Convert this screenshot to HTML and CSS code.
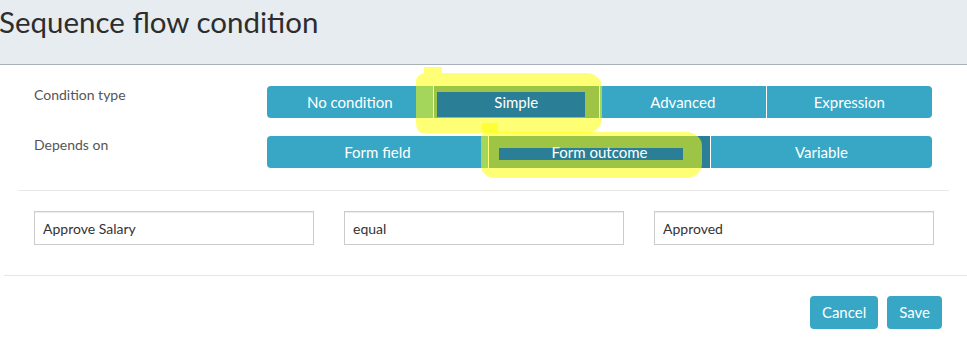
FILE: index.html
```html
<!DOCTYPE html>
<html lang="en">
<head>
  <meta charset="UTF-8">
  <title>Sequence flow condition</title>
  <link rel="stylesheet" href="styles.css">
</head>
<body>
  <div class="modal-header">
    <h2 class="modal-title">Sequence flow condition</h2>
  </div>

  <div class="modal-body">
    <div class="form-row">
      <label class="form-label">Condition type</label>
      <div class="btn-group">
        <button class="btn">No condition</button>
        <button class="btn active">Simple</button>
        <button class="btn">Advanced</button>
        <button class="btn">Expression</button>
      </div>
    </div>
    <div class="form-row">
      <label class="form-label">Depends on</label>
      <div class="btn-group">
        <button class="btn">Form field</button>
        <button class="btn active">Form outcome</button>
        <button class="btn">Variable</button>
      </div>
    </div>

    <hr class="divider">

    <div class="input-row">
      <input class="form-control" type="text" value="Approve Salary">
      <input class="form-control" type="text" value="equal">
      <input class="form-control" type="text" value="Approved">
    </div>
  </div>

  <div class="modal-footer">
    <button class="btn">Cancel</button>
    <button class="btn">Save</button>
  </div>

  <!-- highlighter marks drawn over the screenshot -->
  <div class="marker marker-simple"></div>
  <div class="marker marker-simple-tick"></div>
  <div class="marker marker-outcome"></div>
  <div class="marker marker-outcome-tick"></div>
</body>
</html>
```

FILE: styles.css
```css
* {
  box-sizing: border-box;
}

body {
  position: relative;
  margin: 0;
  width: 967px;
  height: 344px;
  overflow: hidden;
  background: #fff;
  font-family: Lato, "Open Sans", sans-serif;
  color: #333;
}

/* 标题栏 */
.modal-header {
  height: 65px;
  background: #e7ecf0;
  border-bottom: 1px solid #a8b0bc;
  padding-top: 2px;
}

.modal-title {
  margin: 0 0 0 -1px;
  font-size: 29.5px;
  line-height: 40px;
  font-weight: 400;
  color: #2d2d2d;
}

.modal-body {
  padding: 21px 0 0;
}

.form-row {
  display: grid;
  grid-template-columns: 233px 665px;
  align-items: start;
  padding-left: 34px;
  margin-bottom: 18px;
}

.form-label {
  margin-top: -1px;
  font-size: 14px;
  line-height: 20px;
  color: #555;
}

/* 按钮 */
.btn {
  border: 0;
  border-radius: 4px;
  background: #37a7c5;
  color: #fff;
  font-family: inherit;
  font-size: 15px;
  line-height: 33px;
  height: 33px;
  padding: 0 12px;
}

.btn-group {
  display: flex;
  gap: 1px;
}

.btn-group .btn {
  flex: 1;
  height: 32px;
  line-height: 32px;
  border-radius: 0;
  padding: 0;
}
.btn-group .btn:first-child {border-radius: 4px 0 0 4px;}
.btn-group .btn:last-child {border-radius: 0 4px 4px 0;}
.btn-group .btn.active {background: #2a7f96;}

.divider {
  margin: 22px 18px 20px;
  border: 0;
  border-top: 1px solid #e8e8e8;
}

.input-row {
  display: grid;
  grid-template-columns: repeat(3, 280px);
  gap: 30px;
  padding-left: 34px;
}

.form-control {
  height: 34px;
  padding: 6px 8px;
  border: 1px solid #ccc;
  box-shadow: inset 0 1px 1px rgba(0, 0, 0, .075);
  font-family: inherit;
  font-size: 14px;
  line-height: 20px;
  color: #333;
}

.modal-footer {
  display: flex;
  justify-content: flex-end;
  gap: 9px;
  margin: 30px 0 0 4px;
  padding: 20px 25px 0 0;
  border-top: 1px solid #e5e5e5;
}

/* 荧光笔标记 */
.marker {
  position: absolute;
  border-color: rgba(255, 255, 0, .54);
  border-style: solid;
}

.marker-simple {
  left: 416px;
  top: 73px;
  width: 186px;
  height: 60px;
  border-width: 19px 17px 16px 21px;
  border-radius: 10px 16px 16px 6px / 8px 14px 14px 10px;
}

.marker-simple-tick {
  left: 424px;
  top: 67px;
  width: 18px;
  height: 6px;
  border: 0;
  background: rgba(255, 255, 0, .54);
}

.marker-outcome {
  left: 481px;
  top: 132px;
  width: 221px;
  height: 46px;
  border-width: 16px 19px 18px 18px;
  border-radius: 6px 16px 16px 14px / 6px 14px 14px 12px;
}

.marker-outcome-tick {
  left: 482px;
  top: 123px;
  width: 16px;
  height: 9px;
  border: 0;
  background: rgba(255, 255, 0, .54);
}
```
